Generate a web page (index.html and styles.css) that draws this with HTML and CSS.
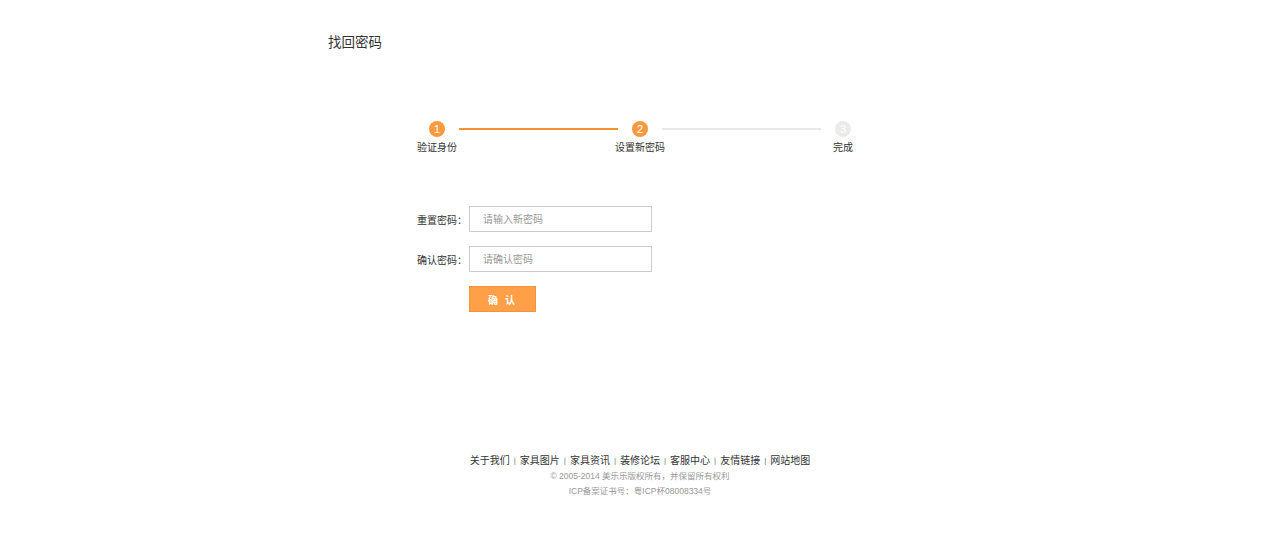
FILE: index.html
```html
<!DOCTYPE html>
<html lang="zh-CN">
<head>
    <meta charset="UTF-8">
    <title>找回密码</title>
    <link rel="stylesheet" href="styles.css">
</head>
<body>
    <div class="header">
        <h1 class="title">找回密码</h1>
    </div>

    <div class="main">
        <div class="steps">
            <div class="step done">
                <span class="num">1</span>
                <span class="label">验证身份</span>
            </div>
            <div class="line done"></div>
            <div class="step done">
                <span class="num">2</span>
                <span class="label">设置新密码</span>
            </div>
            <div class="line"></div>
            <div class="step">
                <span class="num">3</span>
                <span class="label">完成</span>
            </div>
        </div>

        <form class="form" id="resetForm">
            <div class="form-row">
                <label for="newPwd">重置密码：</label>
                <input type="password" id="newPwd" placeholder="请输入新密码">
            </div>
            <div class="form-row">
                <label for="confirmPwd">确认密码：</label>
                <input type="password" id="confirmPwd" placeholder="请确认密码">
            </div>
            <div class="form-row">
                <label></label>
                <button type="submit" class="btn">确 认</button>
            </div>
        </form>
    </div>

    <div class="footer">
        <p class="links">
            <a href="#">关于我们</a><span class="sep">|</span><a href="#">家具图片</a><span class="sep">|</span><a href="#">家具资讯</a><span class="sep">|</span><a href="#">装修论坛</a><span class="sep">|</span><a href="#">客服中心</a><span class="sep">|</span><a href="#">友情链接</a><span class="sep">|</span><a href="#">网站地图</a>
        </p>
        <p class="copy">© 2005-2014 美乐乐版权所有，并保留所有权利</p>
        <p class="copy">ICP备案证书号：粤ICP杯08008334号</p>
    </div>
</body>
</html>
```

FILE: styles.css
```css
* {
    margin: 0;
    padding: 0;
    box-sizing: border-box;
}

body {
    font-family: "Liberation Sans", "Noto Sans CJK SC", sans-serif;
    color: #333;
    background: #fff;
}

.header {
    width: 624px;
    margin: 0 auto;
    padding-top: 34px;
}

.title {
    font-size: 13.5px;
    font-weight: normal;
    line-height: 18px;
    color: #333;
}

.main {
    width: 446px;
    margin: 69px auto 0;
}

.steps {
    display: flex;
    align-items: flex-start;
}

.step {
    width: 40px;
    display: flex;
    flex-direction: column;
    align-items: center;
}

.step .num {
    width: 16px;
    height: 16px;
    border-radius: 50%;
    background: #ebebeb;
    color: #fff;
    font-size: 11px;
    line-height: 16px;
    text-align: center;
}

.step.done .num {
    background: #fa9a3f;
}

.step .label {
    margin-top: 4px;
    font-size: 10px;
    line-height: 14px;
    white-space: nowrap;
    color: #333;
}

.line {
    flex: 1;
    height: 2px;
    margin: 7px 2px 0;
    background: #e8e8e8;
}

.line.done {
    background: #f8922f;
}

.form {
    margin-top: 51px;
}

.form-row {
    display: flex;
    align-items: center;
    margin-bottom: 14px;
}

.form-row label {
    width: 52px;
    font-size: 10px;
    color: #333;
}

.form-row input {
    width: 183px;
    height: 26px;
    border: 1px solid #ccc;
    padding-left: 13px;
    font-size: 10px;
    font-family: inherit;
    outline: none;
}

.form-row input::placeholder {
    color: #999;
}

.btn {
    width: 67px;
    height: 26px;
    background: #ffa048;
    border: 1px solid #f3933a;
    color: #fff;
    font-size: 10px;
    font-weight: bold;
    letter-spacing: 2px;
    font-family: inherit;
    cursor: pointer;
}

.footer {
    margin-top: 141px;
    text-align: center;
}

.links {
    font-size: 10px;
    line-height: 16px;
}

.links a {
    color: #333;
    text-decoration: none;
}

.sep {
    display: inline-block;
    margin: 0 4px;
    color: #777;
    font-size: 8px;
    vertical-align: 1px;
}

.copy {
    font-size: 8.5px;
    line-height: 15px;
    color: #999;
}
```
